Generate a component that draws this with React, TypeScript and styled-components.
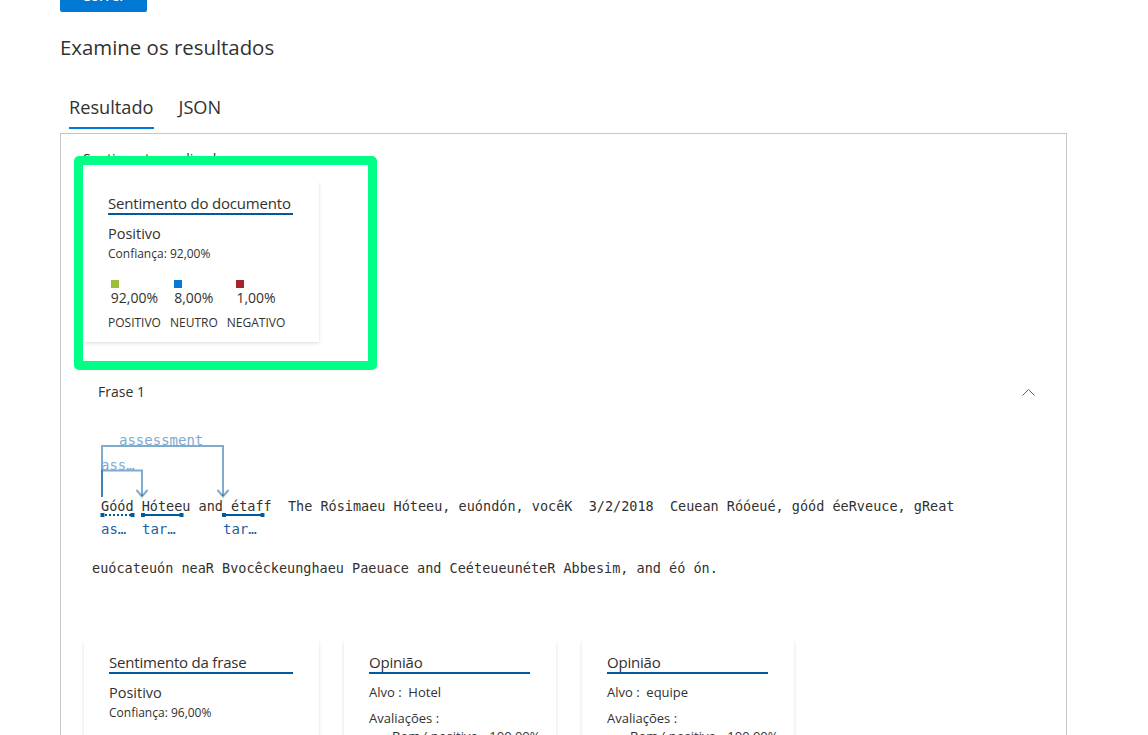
import React from "react";
import styled, { createGlobalStyle } from "styled-components";

const SANS = `"Open Sans", "Noto Sans", "Liberation Sans", sans-serif`;
const MONO = `"DejaVu Sans Mono", "Liberation Mono", monospace`;

const GlobalStyle = createGlobalStyle`
  html, body { margin: 0; padding: 0; background: #ffffff; overflow: hidden; }
  body { font-family: ${SANS}; color: #323130; }
  * { box-sizing: border-box; }
`;

const Page = styled.div`
  margin-top: -20px;
  padding: 0 81px 0 60px;
`;

const RunButton = styled.button`
  display: block;
  width: 87px;
  height: 32px;
  border: none;
  border-radius: 2px;
  background: #0078d4;
  color: #ffffff;
  font: 600 14px/32px ${SANS};
  padding: 0;
`;

const Heading = styled.h2`
  margin: 21px 0 0;
  font: 400 20.4px/28px ${SANS};
  color: #323130;
`;

const TabRow = styled.div`
  display: flex;
  margin: 24px 0 0 1px;
  height: 44px;
`;

const Tab = styled.div<{ $active?: boolean }>`
  position: relative;
  padding: 0 8px;
  margin-right: 9px;
  font: 400 18.2px/44px ${SANS};
  color: #323130;
  &::after {
    content: "";
    position: absolute;
    left: 8px;
    right: 8px;
    bottom: 0;
    height: 2px;
    background: ${(p) => (p.$active ? "#0078d4" : "transparent")};
  }
`;

const Panel = styled.div`
  position: relative;
  margin-top: 4px;
  border: 1px solid #c8c6c4;
  padding: 15px 0 0 22px;
  min-height: 700px;
`;

const Highlight = styled.div`
  position: absolute;
  left: 13px;
  top: 22px;
  width: 303px;
  height: 214px;
  border: 9px solid #00ff85;
  border-radius: 5px;
  pointer-events: none;
`;

const SectionLabel = styled.div`
  font: 400 14px/20px ${SANS};
  color: #323130;
`;

const Card = styled.div<{ $width: number }>`
  width: ${(p) => p.$width}px;
  background: #ffffff;
  box-shadow: 0 1.6px 3.6px rgba(0, 0, 0, 0.13), 0 0.3px 0.9px rgba(0, 0, 0, 0.11);
  padding: 12px 26px 11px 25px;
`;

const DocCard = styled(Card)`
  margin: 12px 0 0 1px;
  padding-left: 24px;
`;

const CardTitle = styled.div`
  font: 400 15px/20px ${SANS};
  color: #323130;
  border-bottom: 2px solid #005a9e;
  letter-spacing: -0.2px;
  white-space: nowrap;
`;

const Label = styled.div`
  margin-top: 9px;
  font: 400 14.5px/20px ${SANS};
  color: #323130;
`;

const Confidence = styled.div`
  margin-top: 2px;
  font: 400 12px/16px ${SANS};
  color: #323130;
`;

const Breakdown = styled.div`
  display: flex;
  gap: 9px;
  margin-top: 18px;
`;

const BreakdownCol = styled.div`
  display: flex;
  flex-direction: column;
  align-items: center;
`;

const ValueBlock = styled.div`
  display: flex;
  flex-direction: column;
  align-items: flex-start;
`;

const Swatch = styled.span<{ $color: string }>`
  display: block;
  width: 8px;
  height: 8px;
  background: ${(p) => p.$color};
`;

const Value = styled.div`
  font: 400 14px/20px ${SANS};
  color: #323130;
`;

const ColLabel = styled.div`
  margin-top: 7px;
  font: 400 12px/16px ${SANS};
  color: #323130;
`;

const Sentence = styled.div`
  margin-top: 40px;
`;

const SentenceHeader = styled.div`
  display: flex;
  align-items: center;
  justify-content: space-between;
  padding: 0 31px 0 15px;
  font: 400 14px/20px ${SANS};
  color: #323130;
`;

const Chevron = styled.svg`
  width: 13px;
  height: 7px;
  display: block;
`;

const SentenceBody = styled.div`
  margin-top: 23px;
  padding-left: 9px;
`;

const AnnotatedLine = styled.div`
  position: relative;
  margin-left: 9px;
  padding: 73px 0 46px;
  font: 400 13.5px/16px ${MONO};
  white-space: pre;
  color: #323130;
`;

const PlainLine = styled.div`
  font: 400 13.5px/16px ${MONO};
  white-space: pre;
  color: #323130;
`;

const ArcSvg = styled.svg`
  position: absolute;
  left: 0;
  top: 0;
  overflow: visible;
`;

const ArcLabel = styled.span<{ $x: number; $y: number }>`
  position: absolute;
  left: ${(p) => p.$x}px;
  top: ${(p) => p.$y}px;
  font: 400 14px/16px ${MONO};
  color: #7eaad3;
`;

const TokenLabel = styled.span<{ $x: number }>`
  position: absolute;
  left: ${(p) => p.$x}px;
  top: 96px;
  font: 400 14px/16px ${MONO};
  color: #1d61a6;
`;

const CardRow = styled.div`
  display: flex;
  align-items: flex-start;
  margin-top: 64px;
  margin-left: 1px;
`;

const RowCard = styled(Card)<{ $gap: number }>`
  margin-right: ${(p) => p.$gap}px;
  height: 170px;
`;

const FieldLine = styled.div<{ $indent?: number; $top?: number }>`
  margin-top: ${(p) => p.$top ?? 0}px;
  padding-left: ${(p) => p.$indent ?? 0}px;
  font: 400 13px/18px ${SANS};
  color: #323130;
  white-space: pre;
`;

const lineColor = "rgba(0, 90, 158, 0.5)";
const markColor = "#005a9e";

function Arcs() {
  return (
    <ArcSvg width="170" height="100" viewBox="0 0 170 100">
      <g fill="none" stroke={lineColor} strokeWidth="2">
        <path d="M1 72 V21 H122 V71" />
        <path d="M116.5 65 L122 71.5 L127.5 65" />
        <path d="M1 72 V45.5 H41 V71" />
        <path d="M35.5 65 L41 71.5 L46.5 65" />
      </g>
      <g stroke={markColor} strokeWidth="2" fill="none">
        <path d="M0 90 H32" strokeDasharray="2 2" />
        <path d="M41 90 H81" />
        <path d="M122 90 H162" />
      </g>
      <g fill={markColor}>
        <rect x="-0.5" y="88" width="4" height="4" />
        <rect x="29.5" y="88" width="4" height="4" />
        <rect x="40" y="88" width="4" height="4" />
        <rect x="78.5" y="88" width="4" height="4" />
        <rect x="121" y="88" width="4" height="4" />
        <rect x="159.5" y="88" width="4" height="4" />
      </g>
    </ArcSvg>
  );
}

export default function App() {
  return (
    <>
      <GlobalStyle />
      <Page>
        <RunButton>Correr</RunButton>
        <Heading>Examine os resultados</Heading>
        <TabRow>
          <Tab $active>Resultado</Tab>
          <Tab>JSON</Tab>
        </TabRow>
        <Panel>
          <SectionLabel>Sentimento analisado</SectionLabel>
          <DocCard $width={235}>
            <CardTitle>Sentimento do documento</CardTitle>
            <Label>Positivo</Label>
            <Confidence>Confiança: 92,00%</Confidence>
            <Breakdown>
              <BreakdownCol>
                <ValueBlock>
                  <Swatch $color="#9bbf3b" />
                  <Value>92,00%</Value>
                </ValueBlock>
                <ColLabel>POSITIVO</ColLabel>
              </BreakdownCol>
              <BreakdownCol>
                <ValueBlock>
                  <Swatch $color="#0a78d6" />
                  <Value>8,00%</Value>
                </ValueBlock>
                <ColLabel>NEUTRO</ColLabel>
              </BreakdownCol>
              <BreakdownCol>
                <ValueBlock>
                  <Swatch $color="#a4262c" />
                  <Value>1,00%</Value>
                </ValueBlock>
                <ColLabel>NEGATIVO</ColLabel>
              </BreakdownCol>
            </Breakdown>
          </DocCard>

          <Sentence>
            <SentenceHeader>
              <span>Frase 1</span>
              <Chevron viewBox="0 0 13 7">
                <polyline points="0.5,6.5 6.5,0.5 12.5,6.5" fill="none" stroke="#605e5c" strokeWidth="1" />
              </Chevron>
            </SentenceHeader>
            <SentenceBody>
              <AnnotatedLine>
                <Arcs />
                <ArcLabel $x={18} $y={7}>assessment</ArcLabel>
                <ArcLabel $x={0} $y={32}>ass…</ArcLabel>
                {"Góód Hóteeu and étaff  The Rósimaeu Hóteeu, euóndón, vocêK  3/2/2018  Ceuean Róóeué, góód éeRveuce, gReat"}
                <TokenLabel $x={0}>as…</TokenLabel>
                <TokenLabel $x={41}>tar…</TokenLabel>
                <TokenLabel $x={122}>tar…</TokenLabel>
              </AnnotatedLine>
              <PlainLine>euócateuón neaR Bvocêckeunghaeu Paeuace and CeéteueunéteR Abbesim, and éó ón.</PlainLine>
            </SentenceBody>
          </Sentence>

          <CardRow>
            <RowCard $width={235} $gap={25}>
              <CardTitle>Sentimento da frase</CardTitle>
              <Label>Positivo</Label>
              <Confidence>Confiança: 96,00%</Confidence>
            </RowCard>
            <RowCard $width={212} $gap={26}>
              <CardTitle>Opinião</CardTitle>
              <FieldLine $top={9}>{"Alvo :  Hotel"}</FieldLine>
              <FieldLine $top={8}>Avaliações :</FieldLine>
              <FieldLine $indent={23}>Bom ( positivo - 100,00%</FieldLine>
            </RowCard>
            <RowCard $width={212} $gap={0}>
              <CardTitle>Opinião</CardTitle>
              <FieldLine $top={9}>{"Alvo :  equipe"}</FieldLine>
              <FieldLine $top={8}>Avaliações :</FieldLine>
              <FieldLine $indent={23}>Bom ( positivo - 100,00%</FieldLine>
            </RowCard>
          </CardRow>
          <Highlight />
        </Panel>
      </Page>
    </>
  );
}
